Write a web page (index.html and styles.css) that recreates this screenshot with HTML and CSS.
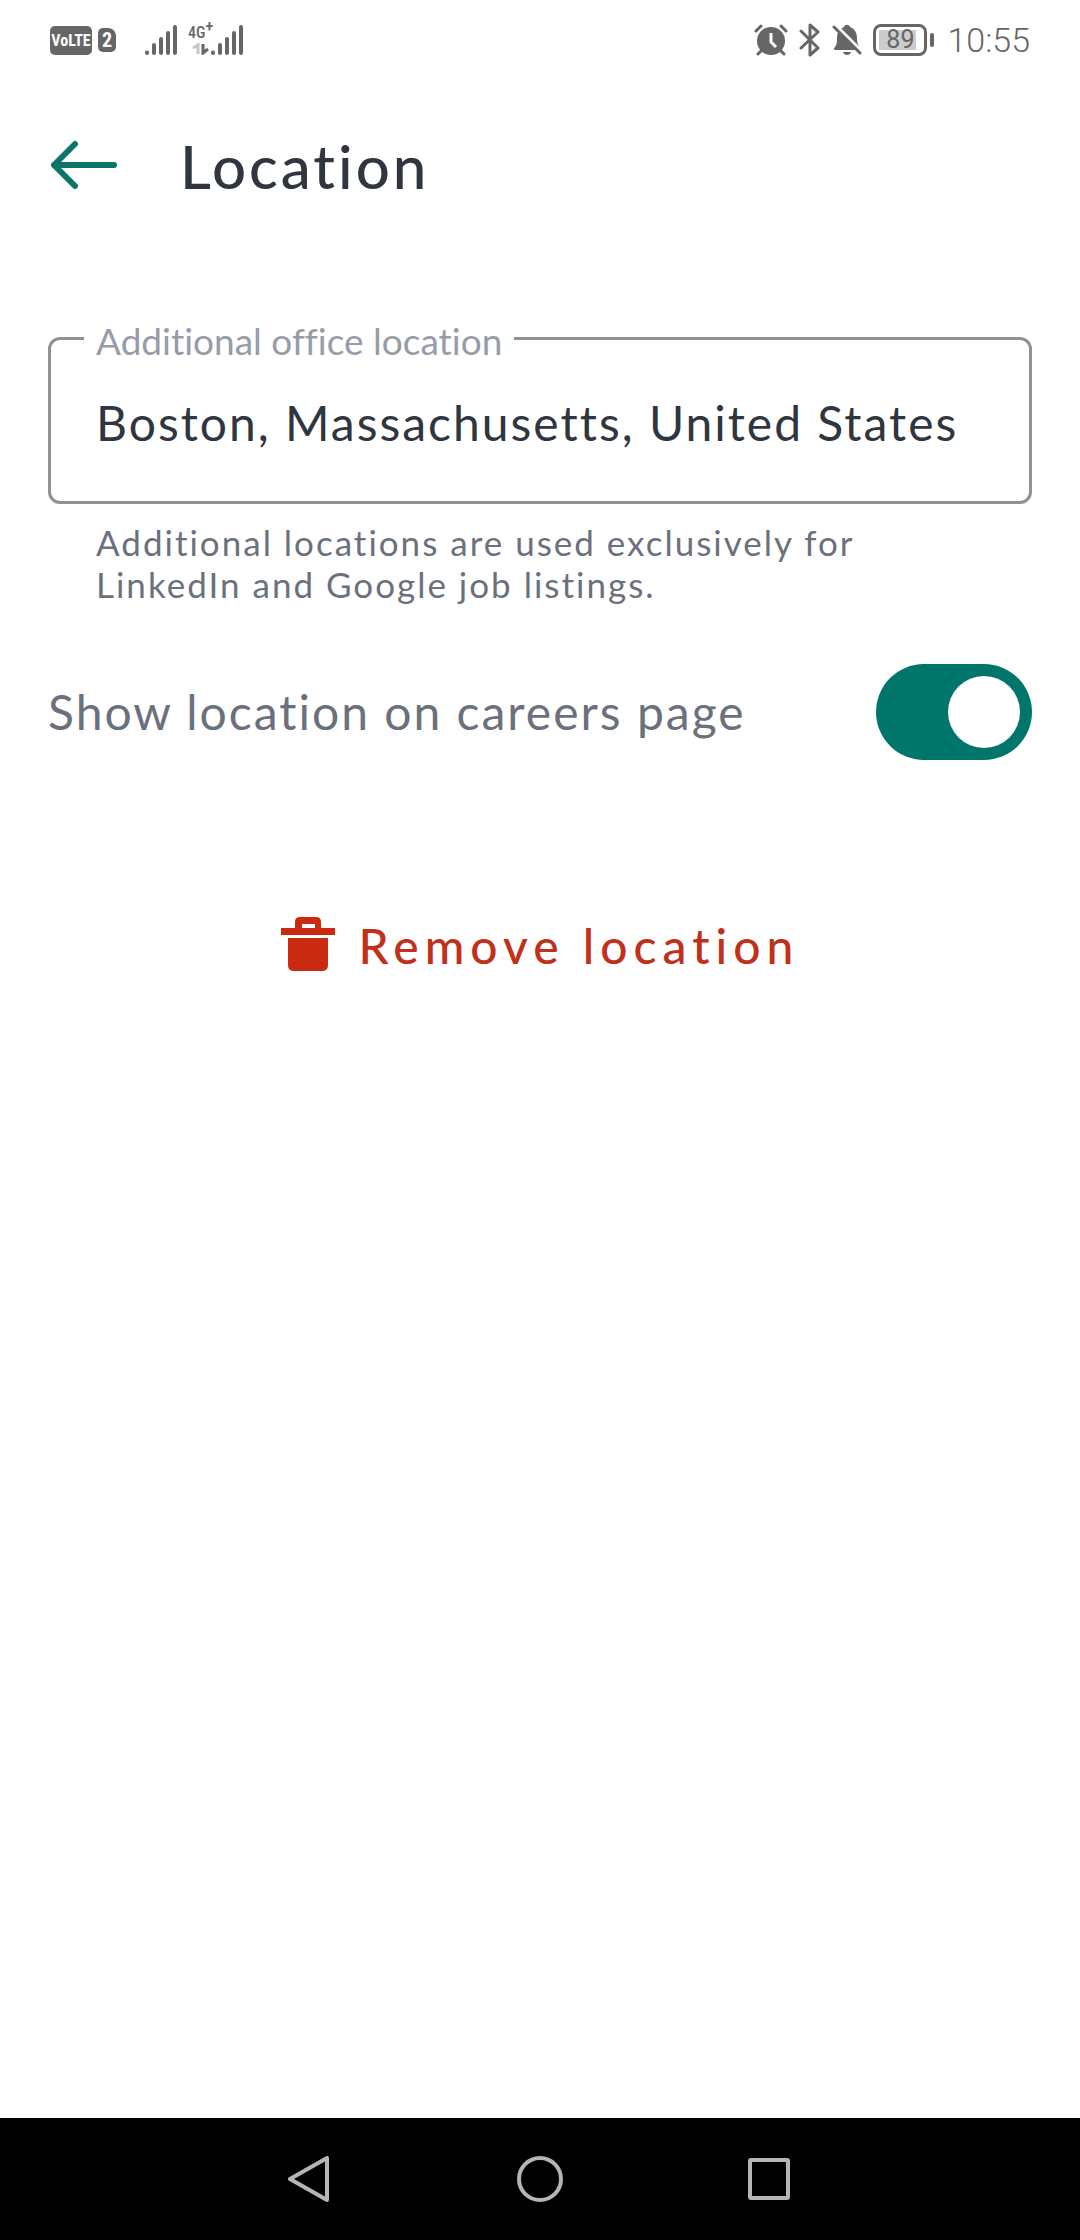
FILE: index.html
```html
<!DOCTYPE html>
<html lang="en">
<head>
<meta charset="utf-8">
<meta name="viewport" content="width=device-width, initial-scale=1">
<title>Location</title>
<link rel="stylesheet" href="styles.css">
</head>
<body>
<div class="screen">
  <div class="status">
    <div class="status-side">
      <span class="volte">VoLTE</span>
      <span class="sim">2</span>
      <svg class="signal" width="34" height="30" viewBox="0 0 34 30" aria-hidden="true">
        <g stroke="#666" stroke-width="4" stroke-linecap="round"><path d="M3 27.500V28M10 20V28M17 14V28M24 8V28M31 2V28"/></g>
      </svg>
      <div class="mobile">
        <span class="network">4G<sup>+</sup></span>
        <svg class="signal" width="56" height="30" viewBox="0 0 56 30" aria-hidden="true">
          <path d="M5 23l5-3v9" fill="none" stroke="#c4c4c4" stroke-width="3"/>
          <path d="M15 19v9l5-4" fill="none" stroke="#666" stroke-width="3"/>
          <g stroke="#666" stroke-width="4" stroke-linecap="round"><path d="M25 27.500V28M32 20V28M39 14V28M46 8V28M53 2V28"/></g>
        </svg>
      </div>
    </div>
    <div class="status-side status-icons">
      <svg width="34" height="32" viewBox="0 0 34 32" aria-hidden="true">
        <circle cx="17" cy="17" r="14" fill="#666"/>
        <path d="M2 7l5-5M32 7l-5-5M7 27l-3 3M27 27l3 3" stroke="#666" stroke-width="3" stroke-linecap="round"/>
        <path d="M17 9v9l5 5" fill="none" stroke="#fff" stroke-width="3"/>
      </svg>
      <svg width="22" height="34" viewBox="0 0 22 34" aria-hidden="true">
        <path d="M2 8l17 17-8 7V2l8 7L2 25" fill="none" stroke="#666" stroke-width="3" stroke-linejoin="round" stroke-linecap="round"/>
      </svg>
      <svg width="30" height="32" viewBox="0 0 30 32" aria-hidden="true">
        <path d="M4 26c-2 0-3-1-1-3 2-3 2-5 2-9 0-6 3-9 7-11 1-3 5-3 6 0 5 2 7 6 7 11 0 5 1 7 3 10 1 1 0 2-2 2z" fill="#666"/>
        <path d="M11 28h8c-1 4-7 4-8 0z" fill="#666"/>
        <path d="M3 1l27 27" stroke="#fff" stroke-width="4"/>
        <path d="M2 3l26 26" stroke="#666" stroke-width="3" stroke-linecap="round"/>
      </svg>
      <span class="battery"><span class="charge">89</span></span>
      <span class="clock">10:55</span>
    </div>
  </div>

  <header class="header">
    <button class="back" type="button" aria-label="Back">
      <svg width="68" height="52" viewBox="0 0 68 52" aria-hidden="true">
        <path d="M25 4L4 25l21 21M4 25h60" fill="none" stroke="#0c7568" stroke-width="6" stroke-linecap="round" stroke-linejoin="round"/>
      </svg>
    </button>
    <h1 class="title">Location</h1>
  </header>

  <main class="content">
    <fieldset class="field">
      <legend class="field-label"><label for="office">Additional office location</label></legend>
      <input class="field-input" id="office" type="text" value="Boston, Massachusetts, United States" aria-describedby="office-help">
    </fieldset>
    <p class="help" id="office-help">Additional locations are used exclusively for LinkedIn and Google job listings.</p>
    <div class="option">
      <label class="option-label" for="show">Show location on careers page</label>
      <input class="switch" id="show" type="checkbox" role="switch" checked>
    </div>
    <button class="remove" type="button">
      <svg width="54" height="56" viewBox="0 0 54 56" aria-hidden="true">
        <path d="M0 11h14V5q0-5 5-5h16q5 0 5 5v6h14v7H0zM21 7v4h13V7z" fill="#c92a11" fill-rule="evenodd"/>
        <path d="M7 21h40v27q0 6-6 6H13q-6 0-6-6z" fill="#c92a11"/>
      </svg>
      Remove location
    </button>
  </main>

  <nav class="navbar" aria-label="System">
    <button class="nav-button" type="button" aria-label="Back">
      <svg width="46" height="46" viewBox="0 0 46 46" aria-hidden="true"><path d="M40 2v42L3 23z" fill="none" stroke="#b5b5b5" stroke-width="4" stroke-linejoin="round"/></svg>
    </button>
    <button class="nav-button" type="button" aria-label="Home">
      <svg width="46" height="46" viewBox="0 0 46 46" aria-hidden="true"><circle cx="23" cy="23" r="21" fill="none" stroke="#b5b5b5" stroke-width="4"/></svg>
    </button>
    <button class="nav-button" type="button" aria-label="Recent apps">
      <svg width="46" height="46" viewBox="0 0 46 46" aria-hidden="true"><rect x="3" y="4" width="38" height="38" rx="1" fill="none" stroke="#b5b5b5" stroke-width="4" stroke-linejoin="round"/></svg>
    </button>
  </nav>
</div>
</body>
</html>
```
FILE: styles.css
```css
* { box-sizing: border-box; }

body {
  margin: 0;
  background: #fff;
  color: #30363f;
  font-family: Lato, "Noto Sans", sans-serif;
  font-variant-ligatures: none;
}

button {
  padding: 0;
  border: 0;
  background: none;
  font: inherit;
  color: inherit;
}

svg { display: block; flex: none; }

.screen {
  display: flex;
  flex-direction: column;
  min-height: 100vh;
}

.status {
  display: flex;
  align-items: center;
  justify-content: space-between;
  height: 80px;
  padding: 0 50px;
  color: #666;
  font-family: Roboto, sans-serif;
}

.status-side { display: flex; align-items: center; gap: 12px; }
.status-icons { gap: 11px; }

.volte, .sim {
  border-radius: 5px;
  background: #666;
  color: #fff;
  font-family: "Roboto Condensed", Roboto, sans-serif;
  font-weight: 700;
  text-align: center;
}

.volte { width: 42px; font-size: 16px; line-height: 29px; }
.sim { width: 18px; margin-left: -6px; border-top-right-radius: 8px; font-size: 20px; line-height: 24px; }
.sim + .signal { margin-left: 16px; }

.mobile { display: grid; align-items: start; margin-left: -2px; }
.mobile > * { grid-area: 1 / 1; }
.network { font-family: "Roboto Condensed", Roboto, sans-serif; font-weight: 500; font-size: 16px; line-height: 16px; }
.network sup { font-size: 16px; line-height: 0; }

.battery {
  position: relative;
  padding: 3px;
  border: 3px solid #666;
  border-radius: 8px;
}
.battery::after {
  content: "";
  position: absolute;
  top: 6px;
  right: -10px;
  width: 4px;
  height: 14px;
  border-radius: 2px;
  background: #666;
}
.charge {
  display: block;
  width: 42px;
  background: linear-gradient(90deg, #ccc 89%, #fff 89%);
  font-size: 25px;
  line-height: 20px;
  text-align: center;
}
.clock { margin-left: 9px; font-size: 34px; font-weight: 300; line-height: 42px; }

.header {
  display: flex;
  align-items: center;
  gap: 62px;
  height: 172px;
  padding: 0 50px;
}
.title { margin: 0; font-size: 60px; font-weight: 500; line-height: 72px; letter-spacing: 3px; }

.content { display: flex; flex: 1; flex-direction: column; padding: 65px 48px; }

.field {
  min-width: 0;
  margin: 0;
  padding: 33px 45px 49px 33px;
  border: 3px solid #919191;
  border-radius: 12px;
}
.field-label { padding: 6px 12px 0; color: #969ca8; font-size: 37px; line-height: 36px; }
.field-input {
  display: block;
  width: 100%;
  height: 60px;
  padding: 0 0 0 12px;
  border: 0;
  outline: 0;
  background: none;
  color: inherit;
  font: inherit;
  font-size: 48px;
  letter-spacing: 2px;
}

.help {
  margin: 17px 48px 0;
  color: #6b717c;
  font-size: 35px;
  line-height: 42px;
  letter-spacing: 2px;
}

.option {
  display: flex;
  align-items: center;
  justify-content: space-between;
  margin-top: 59px;
  color: #6b717c;
}
.option-label { font-size: 48px; line-height: 60px; letter-spacing: 2px; }

.switch {
  appearance: none;
  display: flex;
  width: 156px;
  height: 96px;
  margin: 0;
  padding: 12px;
  border-radius: 48px;
  background: #8f959e;
}
.switch::before { content: ""; width: 72px; height: 72px; border-radius: 50%; background: #fff; }
.switch:checked { justify-content: flex-end; background: #00766a; }

.remove {
  display: flex;
  align-items: center;
  align-self: center;
  gap: 24px;
  height: 96px;
  margin-top: 137px;
  color: #c1301a;
  font-size: 48px;
  font-weight: 500;
  letter-spacing: 6px;
}

.navbar {
  display: flex;
  align-items: center;
  justify-content: center;
  gap: 184px;
  height: 122px;
  background: #000;
}
```
